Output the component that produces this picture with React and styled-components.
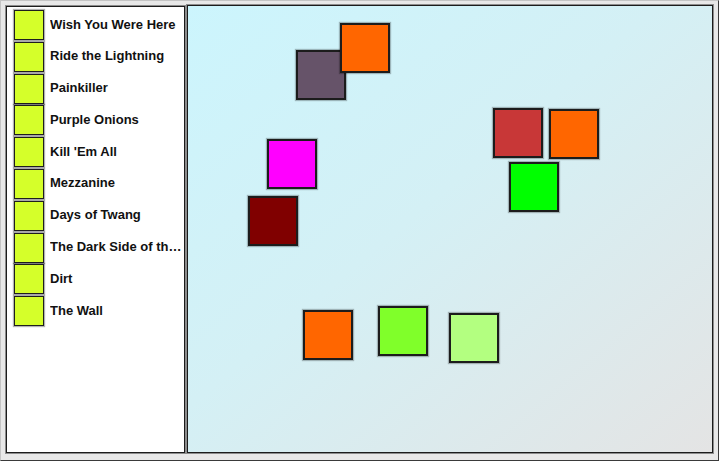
import React from 'react';
import styled, { createGlobalStyle } from 'styled-components';

const GlobalStyle = createGlobalStyle`
  html, body {
    margin: 0;
    padding: 0;
    background: #e8e8e8;
  }
  body {
    font-family: "Liberation Sans", Arial, sans-serif;
  }
`;

const Frame = styled.div`
  box-sizing: border-box;
  width: 719px;
  height: 461px;
  display: flex;
  gap: 2px;
  padding: 4px 5px 7px 5px;
  background: #e8e8e8;
  border: 1px solid;
  border-color: #c4c4c4 #3a3a3a #3a3a3a #c4c4c4;
`;

const Sidebar = styled.div`
  box-sizing: border-box;
  width: 179px;
  margin-top: 1px;
  padding: 3px 0 0 7px;
  background: #fff;
  border: 1px solid #1c1c1c;
  box-shadow: 0 0 0 1px #8c8c8c;
  display: flex;
  flex-direction: column;
  gap: 1.8px;
  overflow: hidden;
`;

const Row = styled.div`
  display: flex;
  align-items: center;
  gap: 6px;
  height: 30px;
  min-width: 0;
`;

const Swatch = styled.div`
  box-sizing: border-box;
  flex: none;
  width: 30px;
  height: 30px;
  background: ${p => p.color};
  border: 1px solid #1e1e1e;
  box-shadow: 0 0 1px 1px rgba(0, 0, 0, 0.3);
`;

const Title = styled.span`
  font-size: 13px;
  font-weight: bold;
  color: #111;
  white-space: nowrap;
  overflow: hidden;
  text-overflow: ellipsis;
  padding-right: 1px;
  margin-top: -2px;
  min-width: 0;
`;

const Canvas = styled.div`
  position: relative;
  box-sizing: border-box;
  flex: 1;
  background: linear-gradient(to bottom right, #ccf5fd 0%, #d4f0f5 45%, #e4e4e4 100%);
  border: 1px solid #1c1c1c;
  box-shadow: 0 0 0 1px #8c8c8c;
  overflow: hidden;
`;

const Square = styled.div`
  position: absolute;
  box-sizing: border-box;
  width: 50px;
  height: 50px;
  background: ${p => p.color};
  border: 2px solid #1c1c1c;
  box-shadow: 0 0 1px 1px rgba(0, 0, 0, 0.25);
`;

const albums = [
  'Wish You Were Here',
  'Ride the Lightning',
  'Painkiller',
  'Purple Onions',
  "Kill 'Em All",
  'Mezzanine',
  'Days of Twang',
  'The Dark Side of the Moon',
  'Dirt',
  'The Wall',
];

// order matters: later squares sit on top
const squares = [
  { color: '#665369', x: 108, y: 44 },
  { color: '#ff6600', x: 152, y: 17 },
  { color: '#ff00ff', x: 79, y: 133 },
  { color: '#800000', x: 60, y: 190 },
  { color: '#c83737', x: 305, y: 102 },
  { color: '#ff6600', x: 361, y: 103 },
  { color: '#00ff00', x: 321, y: 156 },
  { color: '#ff6600', x: 115, y: 304 },
  { color: '#80ff2a', x: 190, y: 300 },
  { color: '#b3ff80', x: 261, y: 307 },
];

const App = () => {
  return (
    <>
      <GlobalStyle />
      <Frame>
        <Sidebar>
          {albums.map(name => (
            <Row key={name}>
              <Swatch color="#d5ff2a" />
              <Title>{name}</Title>
            </Row>
          ))}
        </Sidebar>
        <Canvas>
          {squares.map((s, i) => (
            <Square key={i} color={s.color} style={{ left: s.x, top: s.y }} />
          ))}
        </Canvas>
      </Frame>
    </>
  );
};

export default App;
